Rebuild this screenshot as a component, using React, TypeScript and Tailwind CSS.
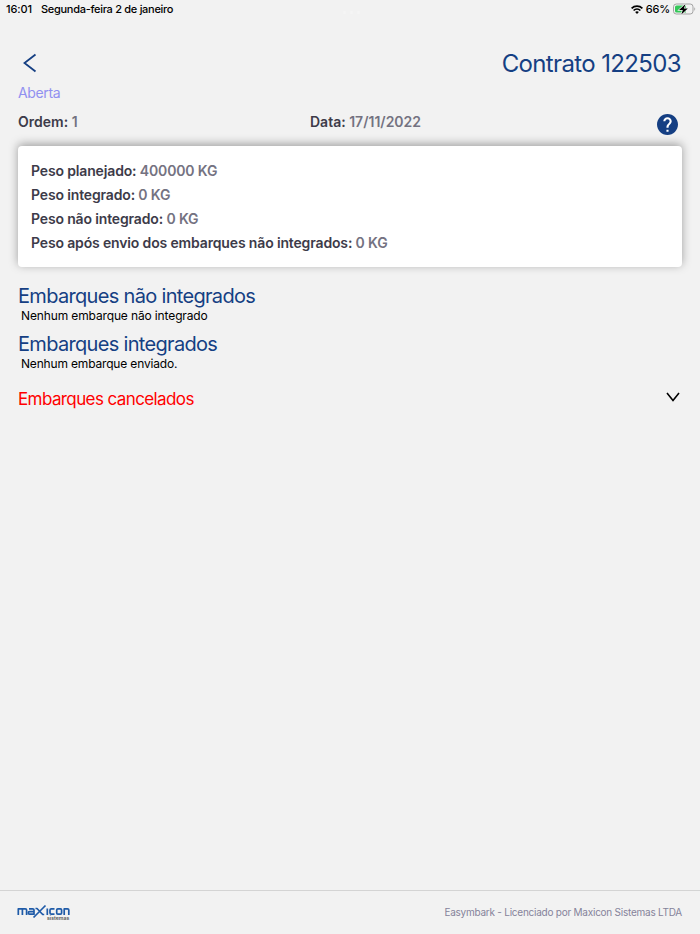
import React from 'react';

const weights = [
  { label: 'Peso planejado:', value: '400000 KG' },
  { label: 'Peso integrado:', value: '0 KG' },
  { label: 'Peso não integrado:', value: '0 KG' },
  { label: 'Peso após envio dos embarques não integrados:', value: '0 KG' },
];

const StatusBar = () => (
  <div className="flex h-[18px] items-center justify-between pl-[6px] pr-[4px] text-[11px] font-medium leading-[18px] text-black">
    <div className="flex w-[170px] gap-[9px] whitespace-nowrap">
      <span className="tracking-[-0.1px]">16:01</span>
      <span className="tracking-[-0.29px]">Segunda-feira 2 de janeiro</span>
    </div>
    <div className="flex gap-[4px] pt-[6px]">
      <span className="size-[3px] rounded-full bg-[#f5f5f5]" />
      <span className="size-[3px] rounded-full bg-[#f5f5f5]" />
      <span className="size-[3px] rounded-full bg-[#f5f5f5]" />
    </div>
    <div className="flex w-[170px] items-center justify-end">
      <svg className="mr-[3px] h-[9px] w-[12px]" viewBox="0 0 12 9" fill="none" stroke="#000" strokeWidth="1.7">
        <path d="M.6 3.4a7.7 7.7 0 0 1 10.8 0" />
        <path d="M2.6 5.5a4.9 4.9 0 0 1 6.8 0" />
        <path d="M6 9 4.1 7.1a2.7 2.7 0 0 1 3.8 0Z" fill="#000" stroke="none" />
      </svg>
      <span className="tracking-[-0.2px]">66%</span>
      <svg className="ml-[3px] h-[12px] w-[23px]" viewBox="0 0 23 12">
        <rect x=".5" y="1" width="19.5" height="10" rx="2.8" fill="none" stroke="#a3a3a3" />
        <path d="M3.6 2.5H13v7H3.6A1.6 1.6 0 0 1 2 7.9V4.1A1.6 1.6 0 0 1 3.6 2.5Z" fill="#34c759" />
        <path d="M21.3 4.3c1.2.4 1.2 3 0 3.4Z" fill="#a3a3a3" />
        <path
          d="M12.5 1 6 7h3.800L8.300 11.500l6.500-6h-3.900Z"
          fill="#000"
          stroke="#f2f2f2"
          strokeWidth="1.4"
          paintOrder="stroke"
        />
      </svg>
    </div>
  </div>
);

const Logo = () => (
  <svg className="h-[17px] w-[53px]" viewBox="0 0 53 17" fill="none">
    <g stroke="#1f5ba8" strokeWidth="1.7" strokeLinejoin="round">
      <path d="M1.300 11V4.800h7q1.300 0 1.300 1.300V11M5.400 4.800V11" />
      <path d="M12 4.800h3.700q1.300 0 1.300 1.300v4.100h-4.500q-1.200 0-1.200-1.300t1.200-1.300H17" />
      <path d="M18.500 4.500h1.500l5.700 6h1.500M16.500 13.500 28.500 1.500" />
      <path d="M30.300 4.500V11" />
      <path d="M37.500 4.800H34.300q-1.300 0-1.300 1.300v2.800q0 1.300 1.300 1.300h3.200" />
      <rect x="39.700" y="4.800" width="4.900" height="5.400" rx="1.200" />
      <path d="M47.200 11V4.800h3.300q1.300 0 1.300 1.300V11" />
    </g>
    <text x="30" y="16" textLength="22.3" lengthAdjust="spacingAndGlyphs" fontSize="5" fontWeight="600" fill="#555" fontFamily="Inter, sans-serif">
      sistemas
    </text>
  </svg>
);

const App = () => {
  return (
    <div className="flex h-screen flex-col bg-[#f2f2f2] font-['Inter',sans-serif] text-[#3d3b49]">
      <StatusBar />

      <main className="flex flex-1 flex-col px-[18px]">
        {/* Title row */}
        <header className="mt-[30px] flex h-[30px] items-center justify-between text-[#153f83]">
          <svg className="ml-[5px] h-[20px] w-[14px]" viewBox="0 0 14 20" fill="none" stroke="currentColor" strokeWidth="1.8">
            <path d="M12.5 1.5 1.5 10l11 8.500" />
          </svg>
          <h1 className="mr-px pt-[2px] text-[24px] leading-[30px] tracking-[-0.63px]">Contrato 122503</h1>
        </header>

        <p className="mt-[5px] text-[14px] leading-5 tracking-[-0.35px] text-[#9090f0]">Aberta</p>

        <div className="mt-[9px] flex h-5 text-[14px] font-semibold leading-5">
          <p className="w-[292px]">
            Ordem: <span className="text-[#747281]">1</span>
          </p>
          <p className="flex-1">
            Data: <span className="text-[#747281]">17/11/2022</span>
          </p>
          <svg className="mr-[4px] mt-[2px] size-[21px]" viewBox="2 2 20 20">
            <circle cx="12" cy="12" r="8" fill="#fff" />
            <path
              fill="#153f83"
              d="M12 2C6.480 2 2 6.480 2 12s4.480 10 10 10 10-4.480 10-10S17.520 2 12 2zm1 17h-2v-2h2v2zm2.070-7.750l-.9.92C13.450 12.900 13 13.500 13 15h-2v-.5c0-1.100.45-2.100 1.170-2.830l1.240-1.260c.37-.36.59-.86.59-1.410 0-1.100-.9-2-2-2s-2 .9-2 2H8c0-2.210 1.790-4 4-4s4 1.790 4 4c0 .88-.36 1.680-.93 2.250z"
            />
          </svg>
        </div>

        {/* Weight summary */}
        <section className="mt-[14px] h-[121px] rounded-[4px] bg-white px-[13px] pt-[13.3px] text-[14px] font-semibold leading-[23.8px] tracking-[-0.15px] shadow-[0_-2px_10px_rgba(0,0,0,0.35)]">
          {weights.map((item) => (
            <p key={item.label}>
              {item.label} <span className="text-[#747281]">{item.value}</span>
            </p>
          ))}
        </section>

        <section className="mt-[17px]">
          <h2 className="text-[20px] leading-6 tracking-[-0.68px] text-[#153f83]">Embarques não integrados</h2>
          <p className="pl-[3px] pt-px text-[12px] leading-[14px] tracking-[-0.13px] text-black">Nenhum embarque não integrado</p>
        </section>

        <section className="mt-[9px]">
          <h2 className="text-[20px] leading-6 tracking-[-0.68px] text-[#153f83]">Embarques integrados</h2>
          <p className="pl-[3px] pt-px text-[12px] leading-[14px] tracking-[-0.17px] text-black">Nenhum embarque enviado.</p>
        </section>

        <section className="mt-[16px] flex h-6 items-center justify-between">
          <h2 className="text-[17px] leading-6 tracking-[-0.6px] text-[#ff0000]">Embarques cancelados</h2>
          <svg className="mb-[4px] mr-[2px] h-[10px] w-[14px]" viewBox="0 0 14 10" fill="none" stroke="#000" strokeWidth="1.6">
            <path d="M1 1l6 7.500L13 1" />
          </svg>
        </section>
      </main>

      <footer className="flex h-[44px] items-center justify-between border-t border-[#d4d4d4] pl-[17px] pr-[18px]">
        <Logo />
        <span className="text-[10px] tracking-[-0.24px] text-[#85839a]">Easymbark - Licenciado por Maxicon Sistemas LTDA</span>
      </footer>
    </div>
  );
};

export default App;
